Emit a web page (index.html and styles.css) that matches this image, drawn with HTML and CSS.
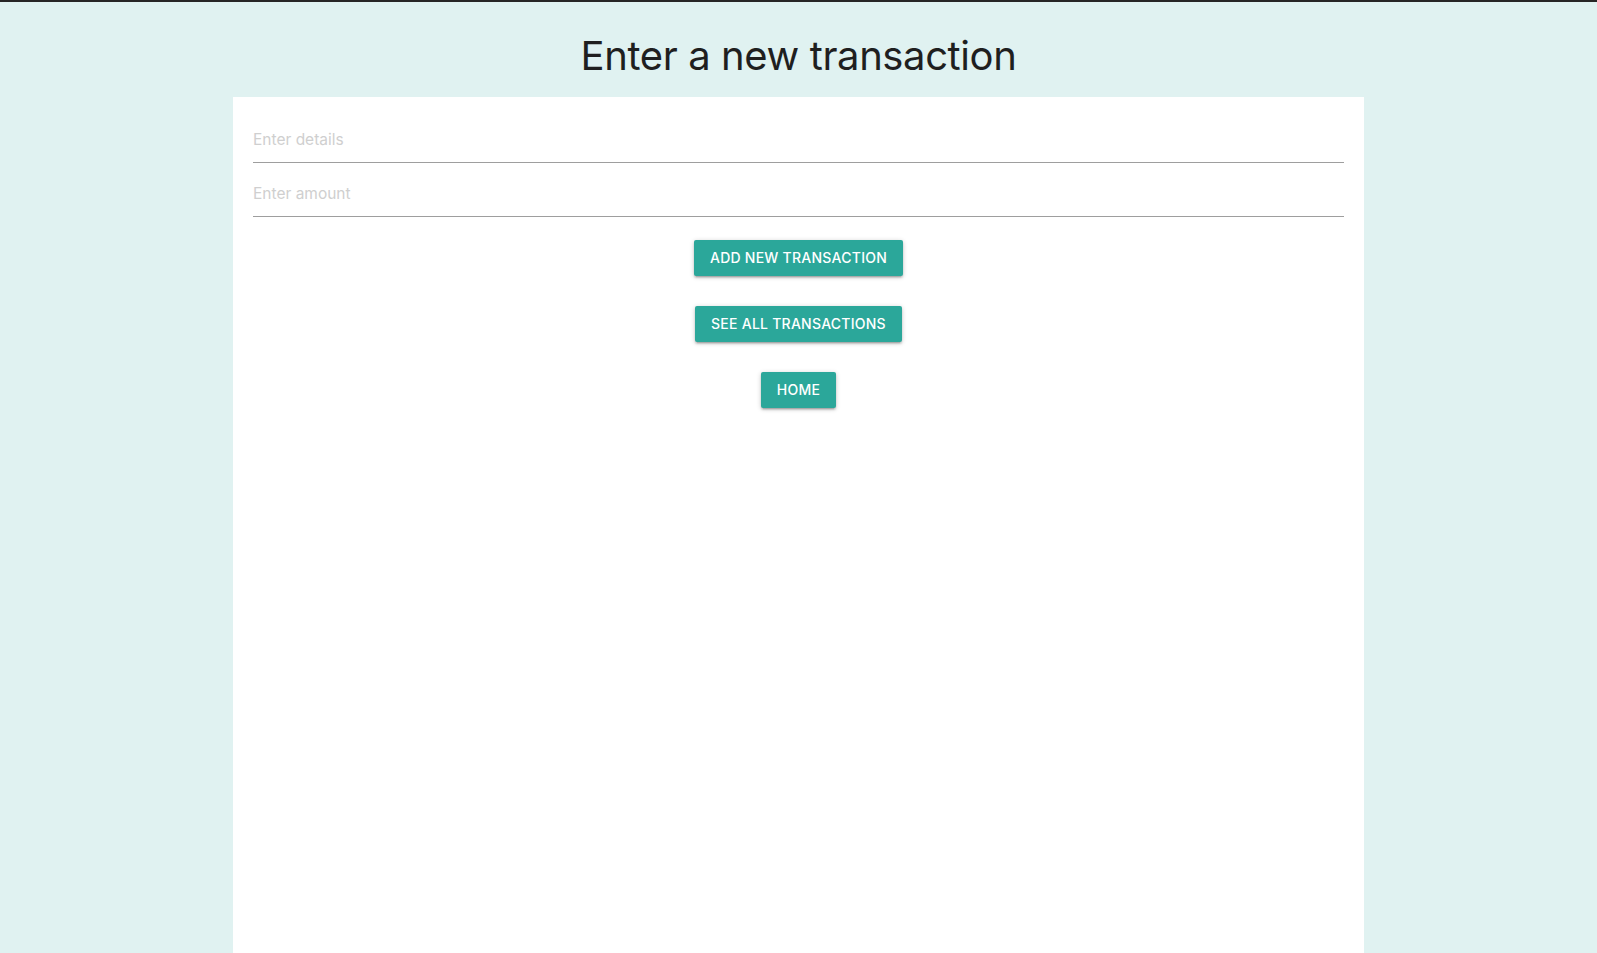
FILE: index.html
```html
<!DOCTYPE html>
<html lang="en">
<head>
<meta charset="utf-8">
<title>Enter a new transaction</title>
<link rel="stylesheet" href="styles.css">
</head>
<body>
<div class="page">
  <header class="header">
    <h1 class="title">Enter a new transaction</h1>
  </header>
  <main class="card">
    <form class="form">
      <input class="field" type="text" placeholder="Enter details">
      <input class="field" type="text" placeholder="Enter amount">
      <div class="actions">
        <button class="btn" type="button">Add new transaction</button>
        <button class="btn" type="button">See all transactions</button>
        <button class="btn" type="button">Home</button>
      </div>
    </form>
  </main>
</div>
</body>
</html>
```

FILE: styles.css
```css
html, body {
  margin: 0;
  padding: 0;
  height: 100%;
}
body {
  background: #e0f2f1;
  font-family: Inter, Roboto, "Liberation Sans", sans-serif;
  border-top: 2px solid #262626;
  box-sizing: border-box;
  overflow: hidden;
}
.page {
  display: flex;
  flex-direction: column;
  height: 100%;
}
.header {
  height: 95px;
  box-sizing: border-box;
  padding-top: 30px;
  display: flex;
  justify-content: center;
}
.title {
  margin: 0;
  font-size: 40px;
  line-height: 48px;
  font-weight: 400;
  color: #1f1f1f;
  letter-spacing: -0.4px;
}
.card {
  flex: 1;
  width: 1131px;
  margin: 0 auto;
  background: #fff;
  box-sizing: border-box;
  padding: 20px 20px 0;
}
.form {
  display: flex;
  flex-direction: column;
}
.field {
  display: block;
  width: 100%;
  height: 46px;
  box-sizing: border-box;
  border: none;
  border-bottom: 1px solid #9e9e9e;
  outline: none;
  padding: 0;
  margin: 0 0 8px;
  font-family: inherit;
  font-size: 15.5px;
  color: #333;
  background: transparent;
}
.field::placeholder {
  color: #cfcfcf;
}
.actions {
  display: flex;
  flex-direction: column;
  align-items: center;
  gap: 30px;
  margin-top: 15px;
}
.btn {
  height: 36px;
  line-height: 36px;
  padding: 0 16px;
  border: none;
  border-radius: 2px;
  background: #2ba79a;
  color: #fff;
  font-family: inherit;
  font-size: 14px;
  font-weight: 500;
  letter-spacing: 0.25px;
  text-transform: uppercase;
  cursor: pointer;
  box-shadow: 0 2px 2px 0 rgba(0,0,0,.14), 0 3px 1px -2px rgba(0,0,0,.12), 0 1px 5px 0 rgba(0,0,0,.2);
}
```
